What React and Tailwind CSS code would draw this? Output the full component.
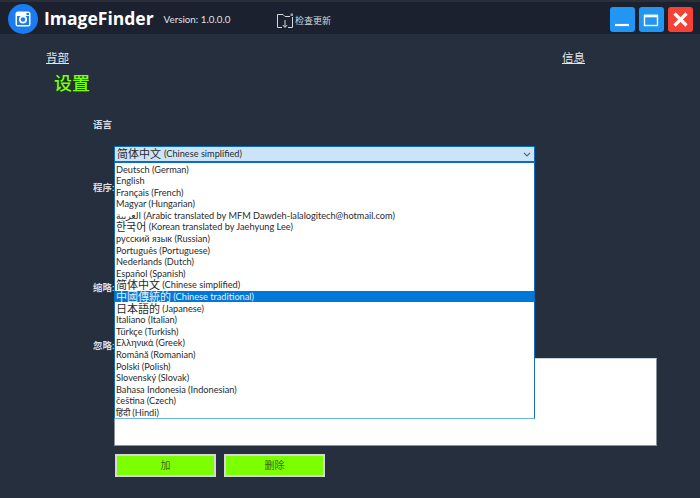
const sans = 'font-["Lato","Noto_Sans_CJK_SC",sans-serif]'

const languages = [
  { text: 'Deutsch (German)' },
  { text: 'English' },
  { text: 'Français (French)' },
  { text: 'Magyar (Hungarian)' },
  { native: 'العربية', text: ' (Arabic translated by MFM Dawdeh-lalalogitech@hotmail.com)' },
  { native: '한국어', text: ' (Korean translated by Jaehyung Lee)', big: true },
  { text: 'русский язык (Russian)' },
  { text: 'Português (Portuguese)' },
  { text: 'Nederlands (Dutch)' },
  { text: 'Español (Spanish)' },
  { native: '简体中文', text: ' (Chinese simplified)', big: true },
  { native: '中國傳統的', text: ' (Chinese traditional)', big: true, active: true },
  { native: '日本語的', text: ' (Japanese)', big: true },
  { text: 'Italiano (Italian)' },
  { text: 'Türkçe (Turkish)' },
  { text: 'Ελληνικά (Greek)' },
  { text: 'Română (Romanian)' },
  { text: 'Polski (Polish)' },
  { text: 'Slovenský (Slovak)' },
  { text: 'Bahasa Indonesia (Indonesian)' },
  { text: 'čeština (Czech)' },
  { native: 'हिंदी', text: ' (Hindi)' },
]

function LogoIcon() {
  return (
    <svg width="30" height="30" viewBox="0 0 30 30" className="shrink-0">
      <circle cx="15" cy="15" r="15" fill="#1a7cf0" />
      <rect x="7.5" y="7.5" width="15" height="15" rx="2.5" fill="#fff" />
      <rect x="9" y="12" width="12" height="9" fill="#1a7cf0" />
      <circle cx="15" cy="15.5" r="4" fill="#fff" />
      <circle cx="15" cy="15.5" r="2.2" fill="#1a7cf0" />
      <rect x="18.5" y="9" width="2.5" height="2" fill="#1a7cf0" />
    </svg>
  )
}

function UpdateIcon() {
  return (
    <svg width="18" height="16" viewBox="0 0 18 16" fill="none" stroke="#d5d8dc" strokeWidth="1" className="shrink-0">
      <path d="M6 14.5H1.5V1.5H7L9 3.5H14" />
      <path d="M12 14.5H16.5V4" />
      <path d="M9 7V14M6.8 12L9 14.5L11.2 12" />
      <rect x="14.5" y="0.5" width="2.5" height="2.5" fill="#9aa0a8" stroke="none" />
    </svg>
  )
}

function WindowButton({ color, children }) {
  return (
    <div className={`w-[25px] h-[25px] rounded-[3px] flex items-center justify-center ${color}`}>
      <svg width="25" height="25" viewBox="0 0 25 25" fill="none" stroke="#fff">
        {children}
      </svg>
    </div>
  )
}

function FieldLabel({ children, className }) {
  return <div className={`pl-[93px] text-[9.5px] leading-[12px] font-semibold text-[#d8dce1] ${className}`}>{children}</div>
}

function GreenButton({ children }) {
  return (
    <button className="w-[101px] h-[23px] bg-[#7cff00] border-2 border-[#d4d8d4] text-[10px] text-[#3c6a10]">
      {children}
    </button>
  )
}

export default function App() {
  return (
    <div className={`w-[700px] h-[498px] overflow-hidden relative bg-[#252f3d] ${sans}`}>

      {/* Title bar */}
      <header className="h-[34px] bg-[#1b212e] border-t-2 border-[#2a2f3a] flex items-start relative">
        <div className="absolute left-[8px] top-[2px]">
          <LogoIcon />
        </div>
        <div className='ml-[44px] mt-[3px] text-[17.5px] leading-[26px] font-bold text-white font-["Open_Sans",sans-serif]'>ImageFinder</div>
        <div className="ml-[10px] mt-[10px] text-[9.8px] leading-[14px] text-[#dfe3e8]">Version: 1.0.0.0</div>
        <div className="absolute left-[276px] top-[11px] flex items-center gap-[1px]">
          <UpdateIcon />
          <span className="text-[9px] leading-[14px] text-[#d5d8dc]">检查更新</span>
        </div>
        <div className="ml-auto mr-[7px] mt-[5px] flex gap-[4px]">
          <WindowButton color="bg-[#2196f3]">
            <path d="M5 18H19" strokeWidth="2.2" />
          </WindowButton>
          <WindowButton color="bg-[#2196f3]">
            <rect x="5.5" y="8.5" width="13" height="10" strokeWidth="1.4" />
            <path d="M5 9H19" strokeWidth="2.6" />
          </WindowButton>
          <WindowButton color="bg-[#f44336]">
            <path d="M6.5 6.5L18.5 18.5M18.5 6.5L6.5 18.5" strokeWidth="3.2" />
          </WindowButton>
        </div>
      </header>

      {/* Nav links */}
      <nav className="flex pt-[16px] text-[11.5px] leading-[16px] text-[#e4e7ea]">
        <span className="ml-[46px] underline">背部</span>
        <span className="ml-[493px] underline">信息</span>
      </nav>

      <h1 className="ml-[54px] mt-[5px] text-[18px] leading-[24px] font-medium text-[#7cff00]">设置</h1>

      <FieldLabel className="mt-[24px]">语言</FieldLabel>
      <FieldLabel className="mt-[51px]">程序:</FieldLabel>
      <FieldLabel className="mt-[88px]">缩略:</FieldLabel>
      <FieldLabel className="mt-[46px]">忽略:</FieldLabel>

      {/* Ignored list and its buttons */}
      <div className="ml-[114px] mt-[6px] w-[543px] h-[88px] bg-white border-t border-t-[#c6d4e2] border-r border-r-[#8a929c] border-b border-b-[#8a929c] border-l border-l-[#8a929c]" />
      <div className="ml-[115px] mt-[8px] flex gap-[8px]">
        <GreenButton>加</GreenButton>
        <GreenButton>删除</GreenButton>
      </div>

      {/* Open language dropdown */}
      <div className="absolute left-[114px] top-[146px] w-[421px]">
        <div className="h-[17px] bg-[#cce4f7] border border-[#0f6cbd] border-b-2 flex items-center pl-[2px] pr-[3px] text-[#2a2a2a]">
          <span className="text-[11px] leading-[14px]">简体中文</span>
          <span className="ml-[3px] text-[9.2px] leading-[14px]">(Chinese simplified)</span>
          <svg width="8" height="5" viewBox="0 0 8 5" fill="none" stroke="#5a6470" strokeWidth="1.2" className="ml-auto">
            <path d="M1 0.8L4 3.8L7 0.8" />
          </svg>
        </div>
        <ul className="h-[256px] bg-white border-x border-x-[#0f6cbd] border-b border-b-[#6db3ee]">
          {languages.map(lang => (
            <li
              key={lang.text}
              className={`h-[11.6px] pl-px pt-px whitespace-nowrap flex items-center text-[9.2px] leading-[11.6px] ${lang.active ? 'bg-[#0078d7] text-[#e8f2fb]' : 'text-[#2a2a2a]'}`}
            >
              {lang.native && (
                <span className={`${lang.big ? 'text-[11px]' : ''} font-["Lato","Noto_Sans_CJK_KR","Noto_Sans_CJK_SC","DejaVu_Sans",sans-serif]`}>
                  {lang.native}
                </span>
              )}
              <span className="whitespace-pre">{lang.text}</span>
            </li>
          ))}
        </ul>
      </div>
    </div>
  )
}
